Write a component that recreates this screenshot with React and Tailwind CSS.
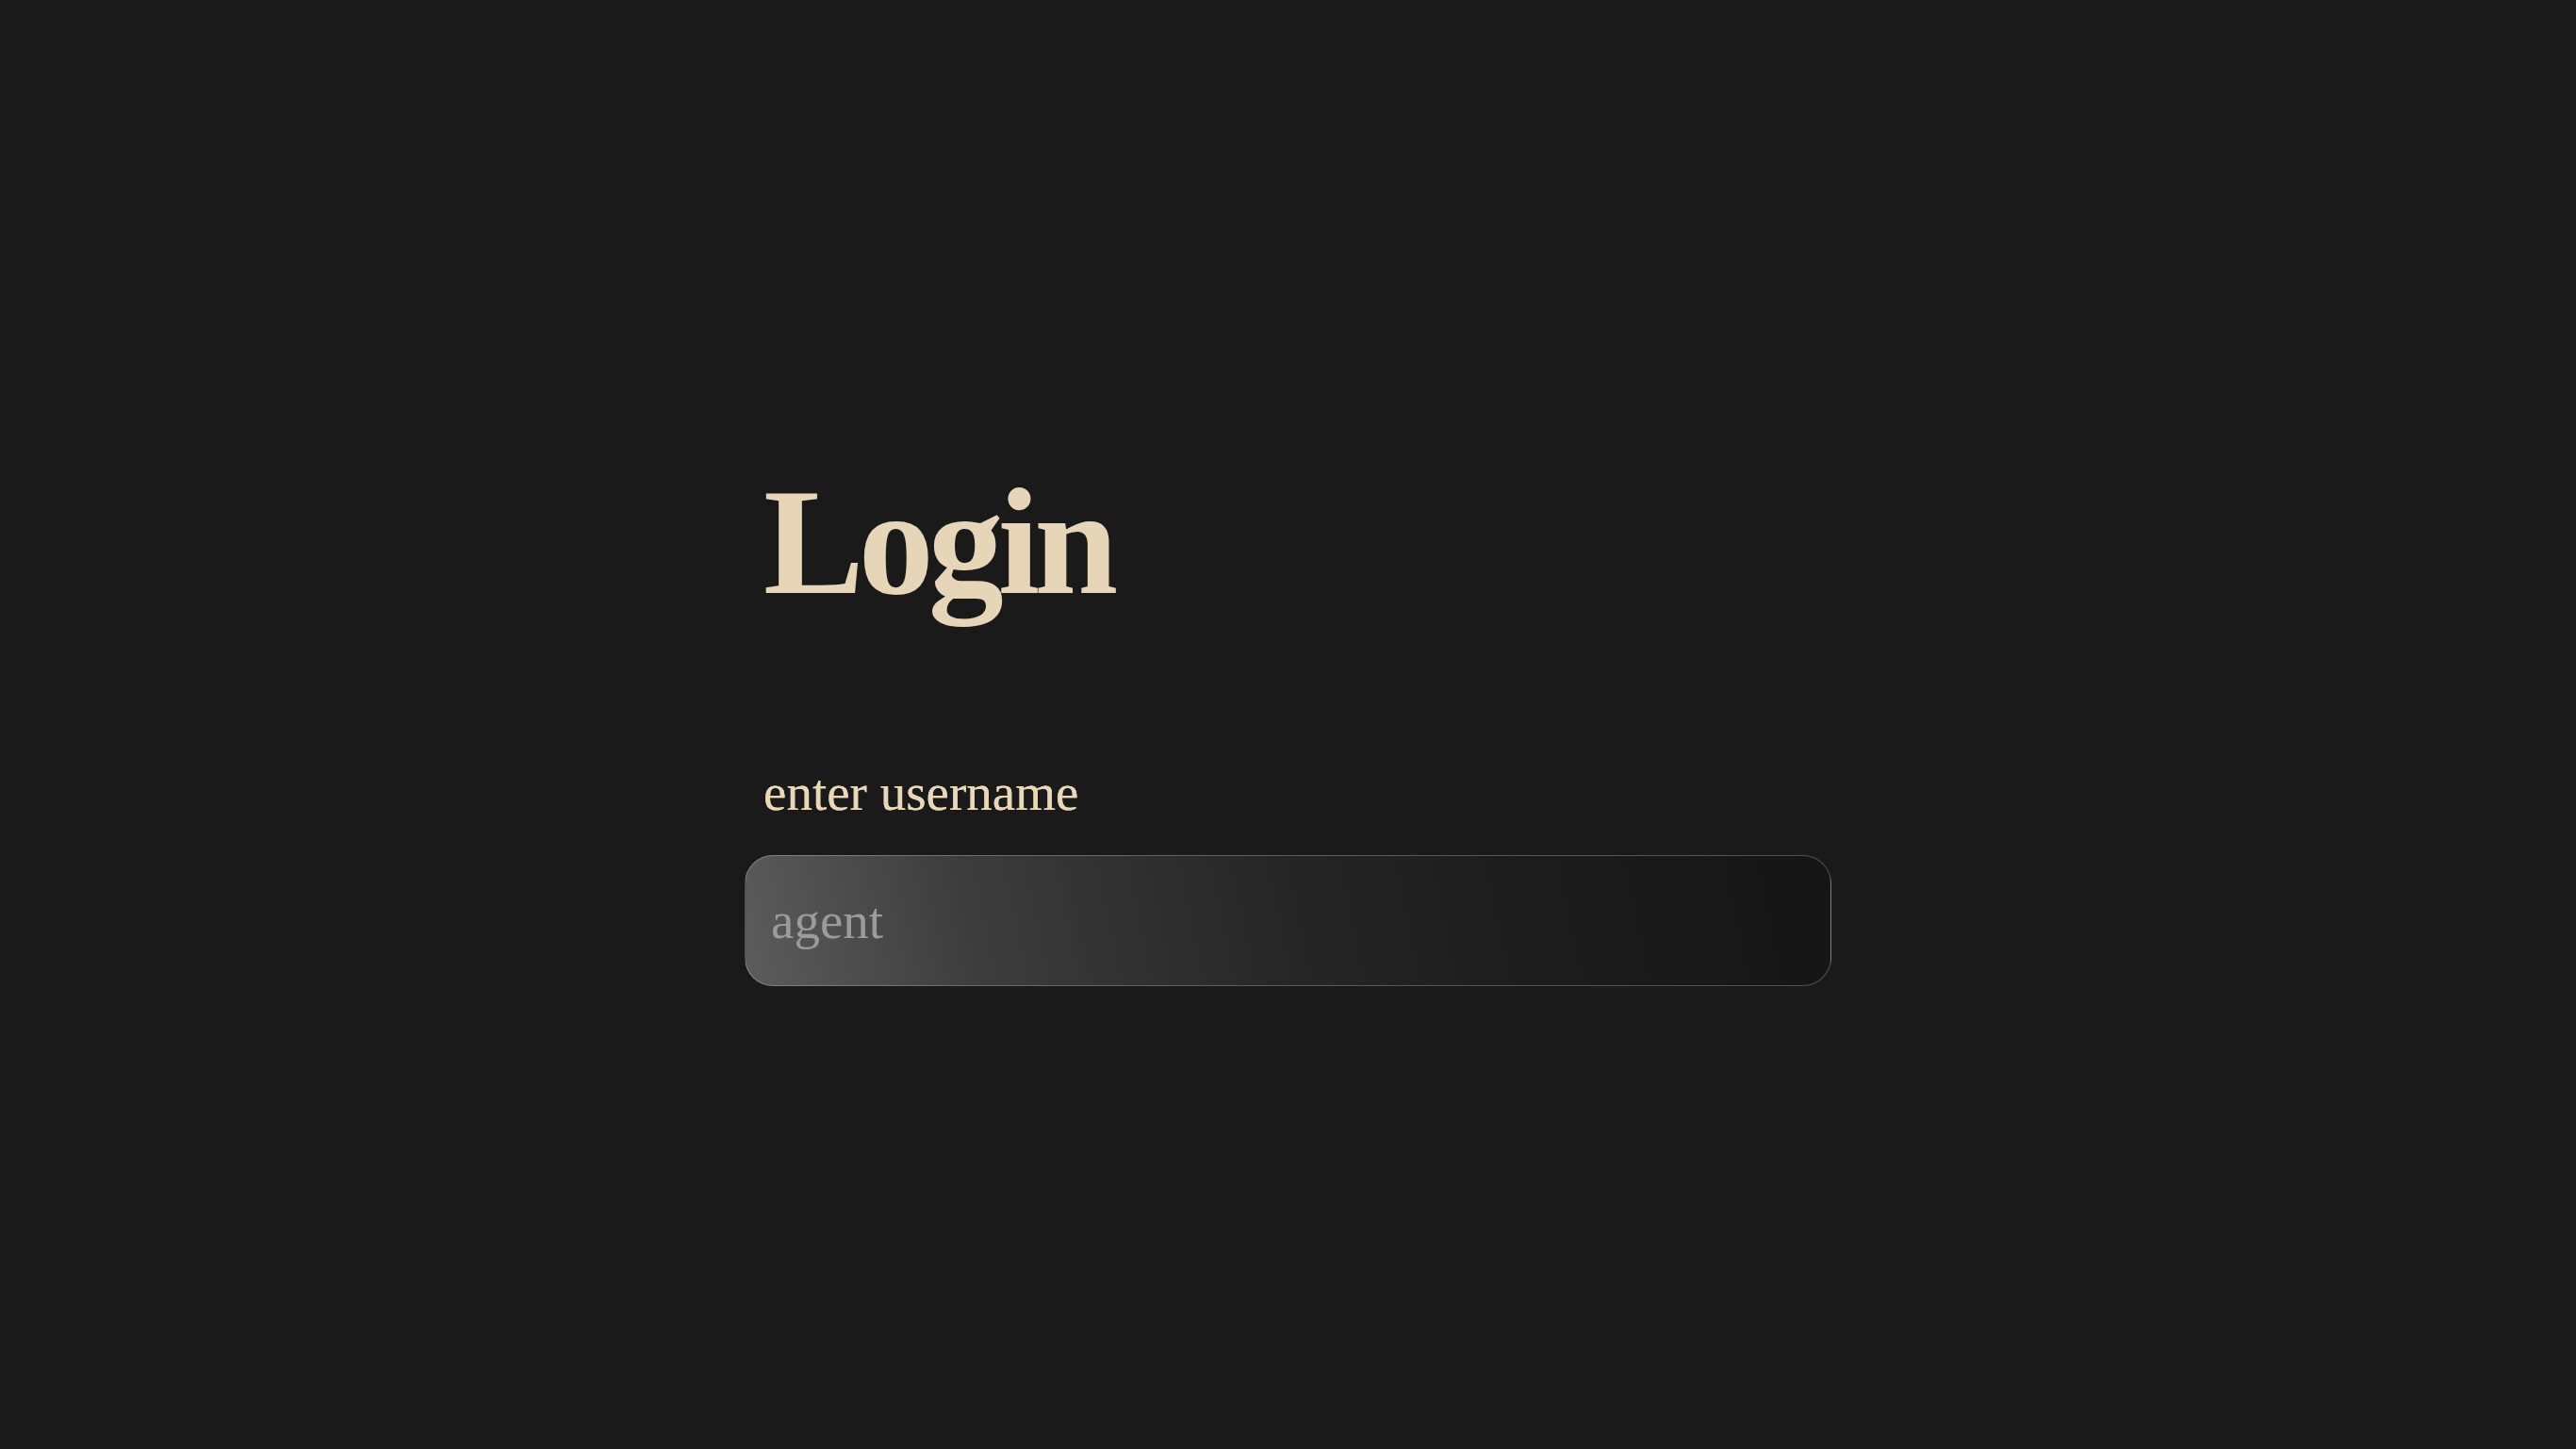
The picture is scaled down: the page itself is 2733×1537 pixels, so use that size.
export default function App() {
  return (
    <div className="min-h-screen w-full bg-[#1a1a1a] flex justify-center">
      <div className="w-[1153px] pt-[495px] flex flex-col">
        {/* Title */}
        <h1 className="pl-[20px] text-[160px] leading-none font-bold tracking-[-6px] text-[#e7d5b7] font-['Liberation_Serif',serif]">
          Login
        </h1>

        {/* Username field */}
        <label
          htmlFor="username"
          className="mt-[158px] pl-[20px] text-[55px] leading-none text-[#ead7b6] font-['Liberation_Serif',serif] [text-shadow:0_0_0.6px_#ead7b6]"
        >
          enter username
        </label>
        <input
          id="username"
          type="text"
          placeholder="agent"
          className="mt-[39px] h-[139px] w-full rounded-[30px] border border-white/25 bg-[linear-gradient(78deg,#5c5c5c_0%,#3c3c3c_22%,#272727_48%,#1c1c1c_72%,#151515_100%)] px-[27px] text-[55px] text-[#e7d5b7] placeholder:text-[#9b9b9b] font-['Liberation_Serif',serif] outline-none"
        />
      </div>
    </div>
  );
}
